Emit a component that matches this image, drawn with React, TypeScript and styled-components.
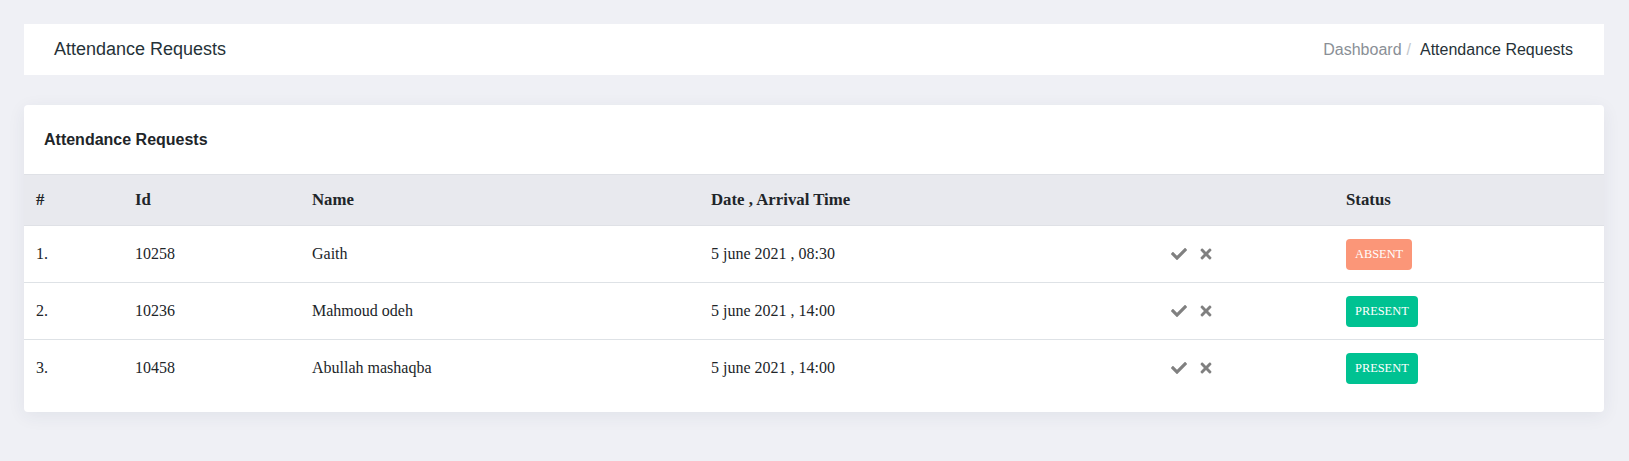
import React from "react";
import styled, { createGlobalStyle } from "styled-components";
import { FaCheck, FaTimes } from "react-icons/fa";

const GlobalStyle = createGlobalStyle`
  html, body {
    margin: 0;
    padding: 0;
    background: #eff0f5;
  }
  * {
    box-sizing: border-box;
  }
`;

const Page = styled.div`
  padding: 24px 25px 24px 24px;
  min-height: 461px;
  display: flex;
  flex-direction: column;
  gap: 30px;
`;

const PageHeader = styled.header`
  height: 51px;
  background: #fff;
  display: flex;
  align-items: center;
  justify-content: space-between;
  padding: 0 31px 0 30px;
  font-family: "Liberation Sans", Arial, sans-serif;
`;

const PageTitle = styled.h1`
  margin: 0;
  font-size: 18px;
  font-weight: 400;
  color: #263238;
`;

const Breadcrumb = styled.nav`
  display: flex;
  align-items: center;
  font-size: 16px;
`;

const CrumbLink = styled.span`
  color: #8a8f96;
`;

const CrumbSep = styled.span`
  color: #c5c8cc;
  padding: 0 9px 0 5px;
`;

const CrumbActive = styled.span`
  color: #263238;
`;

const Card = styled.section`
  background: #fff;
  border-radius: 4px;
  box-shadow: 0 4px 18px rgba(40, 50, 90, 0.07);
  padding-bottom: 15px;
  overflow: hidden;
`;

const CardTitle = styled.h2`
  margin: 0;
  height: 69px;
  display: flex;
  align-items: center;
  padding: 0 20px;
  font-family: "Liberation Sans", Arial, sans-serif;
  font-size: 16px;
  font-weight: 700;
  color: #212529;
`;

const Table = styled.table`
  width: 100%;
  border-collapse: collapse;
  table-layout: fixed;
  font-family: "Liberation Serif", "Times New Roman", serif;
  color: #212529;
`;

const HeadCell = styled.th`
  text-align: left;
  font-size: 16.8px;
  font-weight: 700;
  height: 51px;
  padding: 0 12px;
  background: #e8e9ee;
  border-top: 1px solid #dfe1e6;
  border-bottom: 1px solid #dfe1e6;
`;

const Row = styled.tr`
  & + & td {
    border-top: 1px solid #dee2e6;
  }
`;

const Cell = styled.td`
  height: 57px;
  padding: 0 12px;
  font-size: 16px;
  vertical-align: middle;
`;

const Actions = styled.div`
  display: flex;
  align-items: center;
  gap: 11px;
  color: #808080;
`;

const Badge = styled.span<{ $status: "ABSENT" | "PRESENT" }>`
  display: inline-flex;
  align-items: center;
  height: 31px;
  padding: 0 9px;
  border-radius: 4px;
  font-size: 12.4px;
  color: #fff;
  background: ${({ $status }) => ($status === "ABSENT" ? "#fb9678" : "#00c292")};
`;

interface AttendanceItem {
  id: number;
  name: string;
  date: string;
  status: "ABSENT" | "PRESENT";
}

const requests: AttendanceItem[] = [
  { id: 10258, name: "Gaith", date: "5 june 2021 , 08:30", status: "ABSENT" },
  { id: 10236, name: "Mahmoud odeh", date: "5 june 2021 , 14:00", status: "PRESENT" },
  { id: 10458, name: "Abullah mashaqba", date: "5 june 2021 , 14:00", status: "PRESENT" },
];

const colWidths = [99, 177, 399, 460, 175, 270];

export default function App() {
  return (
    <>
      <GlobalStyle />
      <Page>
        <PageHeader>
          <PageTitle>Attendance Requests</PageTitle>
          <Breadcrumb>
            <CrumbLink>Dashboard</CrumbLink>
            <CrumbSep>/</CrumbSep>
            <CrumbActive>Attendance Requests</CrumbActive>
          </Breadcrumb>
        </PageHeader>
        <Card>
          <CardTitle>Attendance Requests</CardTitle>
          <Table>
            <colgroup>
              {colWidths.map((w, i) => (
                <col key={i} style={{ width: w }} />
              ))}
            </colgroup>
            <thead>
              <tr>
                <HeadCell>#</HeadCell>
                <HeadCell>Id</HeadCell>
                <HeadCell>Name</HeadCell>
                <HeadCell>Date , Arrival Time</HeadCell>
                <HeadCell></HeadCell>
                <HeadCell>Status</HeadCell>
              </tr>
            </thead>
            <tbody>
              {requests.map((item, index) => (
                <Row key={item.id}>
                  <Cell>{index + 1}.</Cell>
                  <Cell>{item.id}</Cell>
                  <Cell>{item.name}</Cell>
                  <Cell>{item.date}</Cell>
                  <Cell>
                    <Actions>
                      <FaCheck size={16} />
                      <FaTimes size={16} />
                    </Actions>
                  </Cell>
                  <Cell>
                    <Badge $status={item.status}>{item.status}</Badge>
                  </Cell>
                </Row>
              ))}
            </tbody>
          </Table>
        </Card>
      </Page>
    </>
  );
}
